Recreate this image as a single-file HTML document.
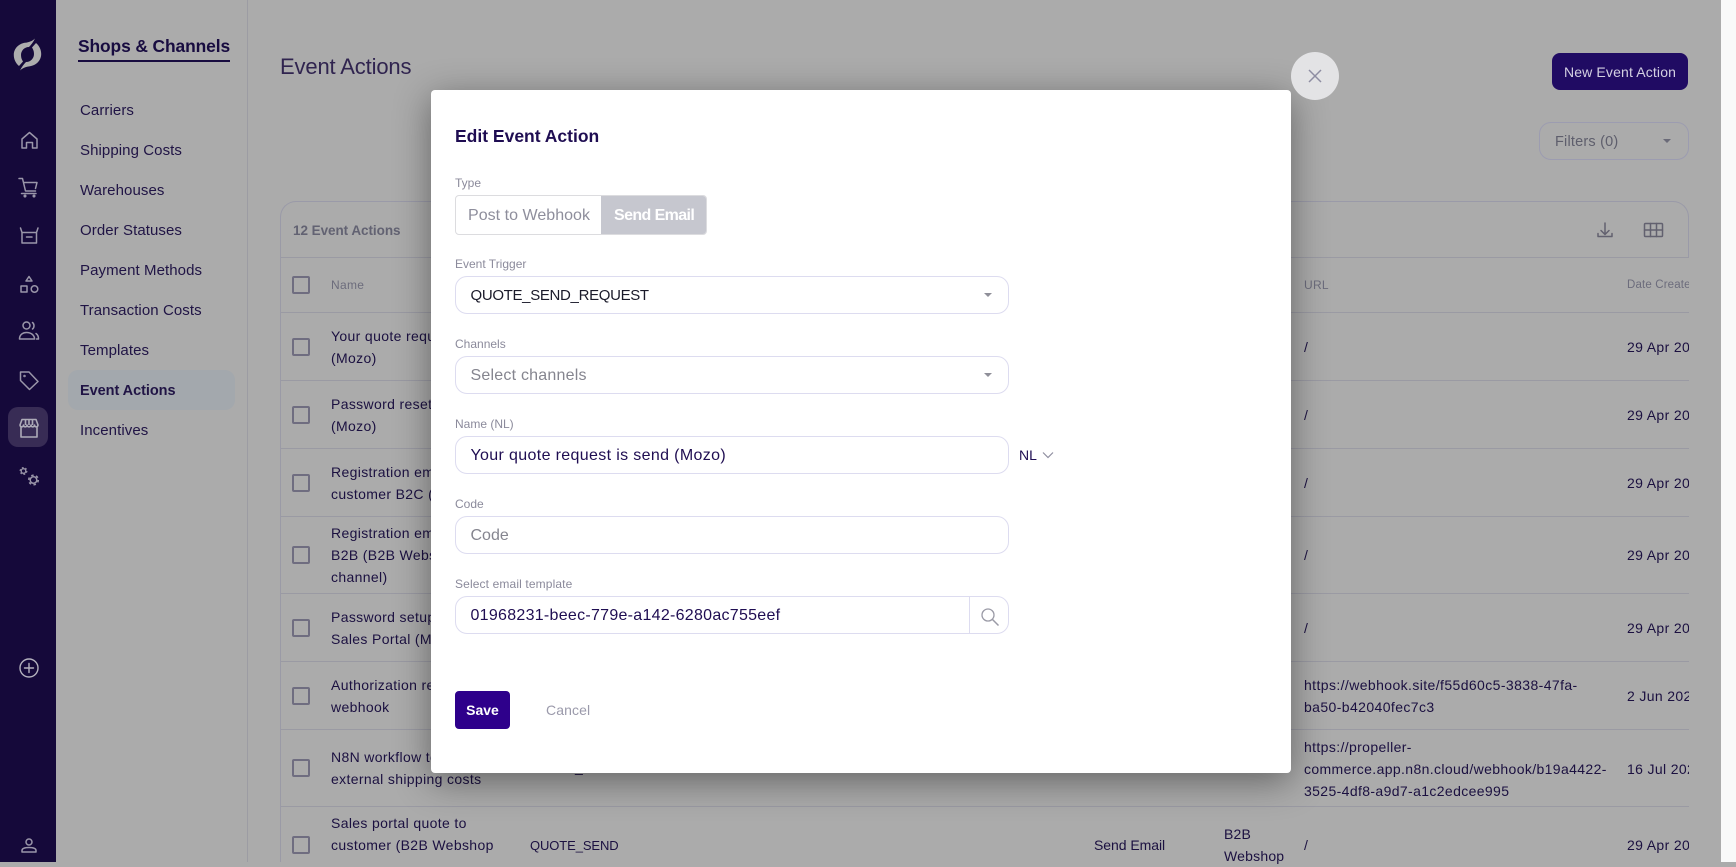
<!DOCTYPE html>
<html><head><meta charset="utf-8"><title>Event Actions</title>
<style>
*{box-sizing:border-box}
html,body{margin:0;padding:0;width:1736px;height:862px;overflow:hidden;background:#ababab;font-family:"Liberation Sans",sans-serif}
.a{position:absolute}
.t{position:absolute;white-space:nowrap;height:22px;line-height:22px;font-size:14px;letter-spacing:.35px;color:#1b1040}
.n{position:absolute;left:80px;white-space:nowrap;height:24px;line-height:24px;font-size:15px;letter-spacing:.08px;color:#201445}
.hl{position:absolute;left:281px;width:1408px;height:1px;background:#9a9aa3}
.cb{position:absolute;left:292px;width:18px;height:18px;border:2px solid #6f6d80;border-radius:2px}
.lb{position:absolute;left:455px;white-space:nowrap;height:16px;line-height:16px;font-size:12px;color:#8b8a9b}
.in{position:absolute;left:455px;width:554px;height:38px;border:1px solid #dddcf0;border-radius:12px;background:#fff}
.v{position:absolute;left:470.500px;white-space:nowrap;height:24px;line-height:24px;font-size:16px;letter-spacing:.35px}
svg{position:absolute;overflow:visible}
.ic{fill:none;stroke:#9a96a9;stroke-width:1.5;stroke-linecap:round;stroke-linejoin:round}
</style></head><body>

<!-- left rail -->
<div class="a" style="left:0;top:0;width:56px;height:862px;background:#15093a"></div>
<div class="a" style="left:8px;top:407px;width:40px;height:40px;border-radius:10px;background:#382c55"></div>
<svg style="left:0;top:0" width="56" height="862">
<path fill="#adadad" d="M35 38.500C33 42.500 31 45 29 47C24 47 21 51 21 55C21 58 22 60 23 61.500L19 66C15.500 63 13.800 59 13.800 55C13.800 48 19.500 43.500 25 42.800C29 42.300 32.500 41 35 38.500Z"/>
<path fill="#adadad" d="M20 70.500C22 66.500 24 64 26 62C31 62 34 58 34 54C34 51 33 49 32 47.500L36 43C39.500 46 41.200 50 41.200 54C41.200 61 35.500 65.500 30 66.200C26 66.700 22.500 68 20 70.500Z"/>
<g class="ic">
<path d="M22 148V139L29.500 132.500L37 139V148H32.500V142.500H26.500V148Z"/>
<path d="M19 178.500H22.500L25.500 191H35.500M23.500 182.500H37L35.500 188.500"/><circle cx="25" cy="196" r=".8"/><circle cx="34" cy="196" r=".8"/><path d="M21.500 193.500H36"/>
<path d="M20.500 228L22 232.500V243H36.500V232.500L38 228M22 232.500H36.500M26.500 237H32"/>
<path d="M29 276.500L32 281H26ZM21 286H27V292H21Z"/><circle cx="34.500" cy="289" r="3.300"/>
<circle cx="26.500" cy="325.500" r="3.500"/><path d="M19.500 339C19.500 334.500 23 332.500 26.500 332.500C31 332.500 34.500 335 34.500 339ZM32.500 322.500C34.500 324 34.500 327.500 32.500 329M36 333.500C37.500 334.500 38.500 336.500 38.500 339H36.500"/>
<path d="M20.500 372H29L38 381.500L29.500 389.500L20.500 380.500Z"/><circle cx="24.500" cy="376" r=".5"/>
</g>
<g fill="none" stroke="#adabb8" stroke-width="1.600" stroke-linejoin="round"><path d="M21 426.500V437H37V426.500M20 425L22 419.500H36L38 425C38 427.500 34.500 427.500 34.500 425C34.500 427.500 31 427.500 31 425C31 427.500 27 427.500 27 425C27 427.500 23.500 427.500 23.500 425C23.500 427.500 20 427.500 20 425ZM25.500 419.500V425M29 419.500V425M32.500 419.500V425"/></g>
<g fill="none" stroke="#9a96a9">
<circle cx="23.500" cy="471" r="2.300" stroke-width="1.300"/><circle cx="23.500" cy="471" r="3.400" stroke-width="1.100" stroke-dasharray="1.800 1.760"/>
<circle cx="33.500" cy="480" r="3.300" stroke-width="1.500"/><circle cx="33.500" cy="480" r="4.800" stroke-width="1.500" stroke-dasharray="2.500 2.530"/>
</g>
<g fill="none" stroke="#b3b1bd" stroke-width="1.400" stroke-linecap="round"><circle cx="29" cy="668" r="9"/><path d="M29 663.500V672.500M24.500 668H33.500"/></g>
<g class="ic"><circle cx="29" cy="842" r="3"/><path d="M22 852V850.500C22 848.500 25 847.500 29 847.500C33 847.500 36 848.500 36 850.500V852Z"/></g>
</svg>

<!-- secondary nav -->
<div class="a" style="left:247px;top:0;width:1px;height:862px;background:#9c9ca3"></div>
<div class="a" style="left:78px;top:34px;white-space:nowrap;height:24px;line-height:24px;font-size:17.400px;font-weight:bold;letter-spacing:-.1px;color:#180c40">Shops &amp; Channels</div>
<div class="a" style="left:78px;top:60px;width:152px;height:2px;background:#180c40"></div>
<div class="a" style="left:68px;top:370px;width:167px;height:40px;border-radius:10px;background:#a3a8ad"></div>
<div class="n" style="top:99px">Carriers</div>
<div class="n" style="top:139px">Shipping Costs</div>
<div class="n" style="top:179px">Warehouses</div>
<div class="n" style="top:219px">Order Statuses</div>
<div class="n" style="top:259px">Payment Methods</div>
<div class="n" style="top:299px">Transaction Costs</div>
<div class="n" style="top:339px">Templates</div>
<div class="n" style="top:379px;font-weight:bold;font-size:14.500px;letter-spacing:-.05px">Event Actions</div>
<div class="n" style="top:419px">Incentives</div>

<!-- header -->
<div class="a" style="left:280px;top:51px;white-space:nowrap;height:32px;line-height:32px;font-size:22px;color:#30244f;letter-spacing:-.15px">Event Actions</div>
<div class="a" style="left:1552px;top:53px;width:136px;height:37px;border-radius:8px;background:#200b63;color:#d3d0e2;font-size:14px;letter-spacing:.15px;line-height:38px;text-align:center;white-space:nowrap">New Event Action</div>
<div class="a" style="left:1539px;top:122px;width:150px;height:38px;border:1px solid #9c9cb0;border-radius:12px"></div>
<div class="a" style="left:1555px;top:131px;white-space:nowrap;height:22px;line-height:22px;font-size:14.500px;letter-spacing:.2px;color:#5e5e6c">Filters (0)</div>
<div class="a" style="left:1663px;top:139px;width:0;height:0;border-left:4px solid transparent;border-right:4px solid transparent;border-top:4px solid #6a6a78"></div>

<!-- table -->
<div class="a" style="left:280px;top:201px;width:1409px;height:57px;border:1px solid #9a9aa8;border-bottom:0;border-radius:16px 16px 0 0"></div>
<div class="a" style="left:280px;top:240px;width:1px;height:622px;background:#9a9aa6"></div>
<div class="hl" style="top:257px"></div><div class="hl" style="top:312px"></div><div class="hl" style="top:380px"></div><div class="hl" style="top:448px"></div><div class="hl" style="top:516px"></div><div class="hl" style="top:593px"></div><div class="hl" style="top:661px"></div><div class="hl" style="top:729px"></div><div class="hl" style="top:806px"></div>
<div class="t" style="left:293px;top:220px;font-weight:bold;font-size:13.500px;letter-spacing:-.05px;color:#626272">12 Event Actions</div>
<svg style="left:0;top:0" width="1736" height="300">
<g fill="none" stroke="#62616f" stroke-width="1.500" stroke-linecap="round" stroke-linejoin="round">
<path d="M1605 223V234M1601 230.500L1605 234.500L1609 230.500M1598 233.500V236.500H1612V233.500"/>
<rect x="1644.500" y="223.500" width="18" height="13" rx="1"/><path d="M1650.500 223.500V236.500M1656.500 223.500V236.500M1644.500 230H1662.500"/>
</g></svg>

<div class="cb" style="top:276px"></div><div class="cb" style="top:338px"></div><div class="cb" style="top:406px"></div><div class="cb" style="top:474px"></div><div class="cb" style="top:546px"></div><div class="cb" style="top:619px"></div><div class="cb" style="top:687px"></div><div class="cb" style="top:759px"></div><div class="cb" style="top:836px"></div>

<div class="t" style="left:331px;top:274px;font-size:12px;letter-spacing:.3px;color:#6c6c7c">Name</div>
<div class="t" style="left:1304px;top:274px;font-size:12px;letter-spacing:.3px;color:#6c6c7c">URL</div>
<div class="a" style="left:1627px;top:274px;width:62px;height:22px;overflow:hidden"><div class="t" style="left:0;top:0;font-size:11.500px;letter-spacing:.15px;color:#6c6c7c">Date Created</div></div>

<div class="t" style="left:331px;top:325px">Your quote request is send</div><div class="t" style="left:331px;top:347px">(Mozo)</div>
<div class="t" style="left:331px;top:393px">Password reset email</div><div class="t" style="left:331px;top:415px">(Mozo)</div>
<div class="t" style="left:331px;top:461px">Registration email to</div><div class="t" style="left:331px;top:483px">customer B2C (Mozo)</div>
<div class="t" style="left:331px;top:522px">Registration email to customer</div><div class="t" style="left:331px;top:544px">B2B (B2B Webshop</div><div class="t" style="left:331px;top:566px">channel)</div>
<div class="t" style="left:331px;top:606px">Password setup</div><div class="t" style="left:331px;top:628px">Sales Portal (Mozo)</div>
<div class="t" style="left:331px;top:674px">Authorization request</div><div class="t" style="left:331px;top:696px">webhook</div>
<div class="t" style="left:331px;top:746px">N8N workflow to get</div><div class="t" style="left:331px;top:768px">external shipping costs</div>
<div class="t" style="left:575px;top:756px">_</div>
<div class="a" style="left:281px;top:812px;width:300px;height:50px;overflow:hidden"><div class="t" style="left:50px;top:0">Sales portal quote to</div><div class="t" style="left:50px;top:22px">customer (B2B Webshop</div><div class="t" style="left:50px;top:44px">channel)</div></div>
<div class="t" style="left:530px;top:835px;font-size:13px;letter-spacing:-.1px">QUOTE_SEND</div>
<div class="t" style="left:1094px;top:834px;letter-spacing:-.05px">Send Email</div>
<div class="t" style="left:1224px;top:823px;letter-spacing:.2px">B2B</div><div class="t" style="left:1224px;top:845px;letter-spacing:.2px">Webshop</div>

<div class="t" style="left:1304px;top:336px">/</div><div class="t" style="left:1304px;top:404px">/</div><div class="t" style="left:1304px;top:472px">/</div><div class="t" style="left:1304px;top:544px">/</div><div class="t" style="left:1304px;top:617px">/</div><div class="t" style="left:1304px;top:834px">/</div>
<div class="t" style="left:1304px;top:674px;letter-spacing:.4px">https://webhook.site/f55d60c5-3838-47fa-</div><div class="t" style="left:1304px;top:696px;letter-spacing:.4px">ba50-b42040fec7c3</div>
<div class="t" style="left:1304px;top:736px;letter-spacing:.37px">https://propeller-</div><div class="t" style="left:1304px;top:758px;letter-spacing:.37px">commerce.app.n8n.cloud/webhook/b19a4422-</div><div class="t" style="left:1304px;top:780px;letter-spacing:.37px">3525-4df8-a9d7-a1c2edcee995</div>

<div class="a" style="left:1627px;top:300px;width:62px;height:562px;overflow:hidden">
<div class="t" style="left:0;top:36px">29 Apr 2025</div><div class="t" style="left:0;top:104px">29 Apr 2025</div><div class="t" style="left:0;top:172px">29 Apr 2025</div><div class="t" style="left:0;top:244px">29 Apr 2025</div><div class="t" style="left:0;top:317px">29 Apr 2025</div><div class="t" style="left:0;top:385px">2 Jun 2025</div><div class="t" style="left:0;top:458px">16 Jul 2025</div><div class="t" style="left:0;top:534px">29 Apr 2025</div>
</div>

<!-- scrollbar strip -->
<div class="a" style="left:1721px;top:0;width:15px;height:862px;background:#f9f9f9"></div>

<!-- modal -->
<div class="a" style="left:431px;top:90px;width:860px;height:683px;background:#fff;border-radius:4px;box-shadow:0 8px 36px rgba(0,0,0,.42)"></div>
<div class="a" style="left:1291px;top:52px;width:48px;height:48px;border-radius:50%;background:#e3e3e5"></div>
<svg style="left:1291px;top:52px" width="48" height="48"><path d="M18 18L30 30M30 18L18 30" stroke="#8e8da2" stroke-width="1.500" fill="none"/></svg>

<div class="a" style="left:455px;top:124px;white-space:nowrap;height:24px;line-height:24px;font-size:17.500px;font-weight:bold;color:#1f0d52">Edit Event Action</div>

<div class="lb" style="top:175px">Type</div>
<div class="a" style="left:455px;top:195px;width:252px;height:40px;border:1px solid #dcdcdf;border-radius:4px;overflow:hidden;background:#fff"><div class="a" style="left:145px;top:0;width:106px;height:38px;background:#c6c7cf"></div></div>
<div class="a" style="left:468px;top:203.500px;white-space:nowrap;height:24px;line-height:24px;font-size:16px;letter-spacing:.03px;color:#8e8e9c">Post to Webhook</div>
<div class="a" style="left:614px;top:203.500px;white-space:nowrap;height:24px;line-height:24px;font-size:16px;font-weight:bold;letter-spacing:-.6px;color:#fff">Send Email</div>

<div class="lb" style="top:256px">Event Trigger</div>
<div class="in" style="top:276px"></div>
<div class="v" style="top:284px;font-size:15px;color:#1a1a2a;letter-spacing:-.33px">QUOTE_SEND_REQUEST</div>
<div class="a" style="left:984px;top:293px;width:0;height:0;border-left:4px solid transparent;border-right:4px solid transparent;border-top:4px solid #8f8f99"></div>

<div class="lb" style="top:336px">Channels</div>
<div class="in" style="top:356px"></div>
<div class="v" style="top:364px;color:#85858f;letter-spacing:.22px">Select channels</div>
<div class="a" style="left:984px;top:373px;width:0;height:0;border-left:4px solid transparent;border-right:4px solid transparent;border-top:4px solid #8f8f99"></div>

<div class="lb" style="top:416px">Name (NL)</div>
<div class="in" style="top:436px"></div>
<div class="v" style="top:444px;color:#1f0d52">Your quote request is send (Mozo)</div>
<div class="a" style="left:1019px;top:444px;white-space:nowrap;height:22px;line-height:22px;font-size:14px;color:#1f0d52">NL</div>
<svg style="left:1042px;top:451px" width="12" height="8"><path d="M1 1.500L6 6.500L11 1.500" stroke="#8f8ea0" stroke-width="1.200" fill="none"/></svg>

<div class="lb" style="top:496px">Code</div>
<div class="in" style="top:516px"></div>
<div class="v" style="top:524px;color:#85858f;letter-spacing:0">Code</div>

<div class="lb" style="top:576px;letter-spacing:.13px">Select email template</div>
<div class="in" style="top:596px"></div>
<div class="a" style="left:969px;top:597px;width:1px;height:36px;background:#dddcf0"></div>
<div class="v" style="top:604px;color:#1f0d52;letter-spacing:.28px">01968231-beec-779e-a142-6280ac755eef</div>
<svg style="left:980px;top:607px" width="20" height="20"><circle cx="8" cy="8" r="6" fill="none" stroke="#9a9aa6" stroke-width="1.300"/><path d="M12.500 12.500L18.500 18.500" stroke="#9a9aa6" stroke-width="1.500"/></svg>

<div class="a" style="left:455px;top:691px;width:55px;height:38px;border-radius:4px;background:#2e008b;color:#fff;font-size:14px;font-weight:bold;line-height:38px;text-align:center">Save</div>
<div class="a" style="left:546px;top:699px;white-space:nowrap;height:22px;line-height:22px;font-size:14px;letter-spacing:.1px;color:#9b9aab">Cancel</div>

</body></html>
